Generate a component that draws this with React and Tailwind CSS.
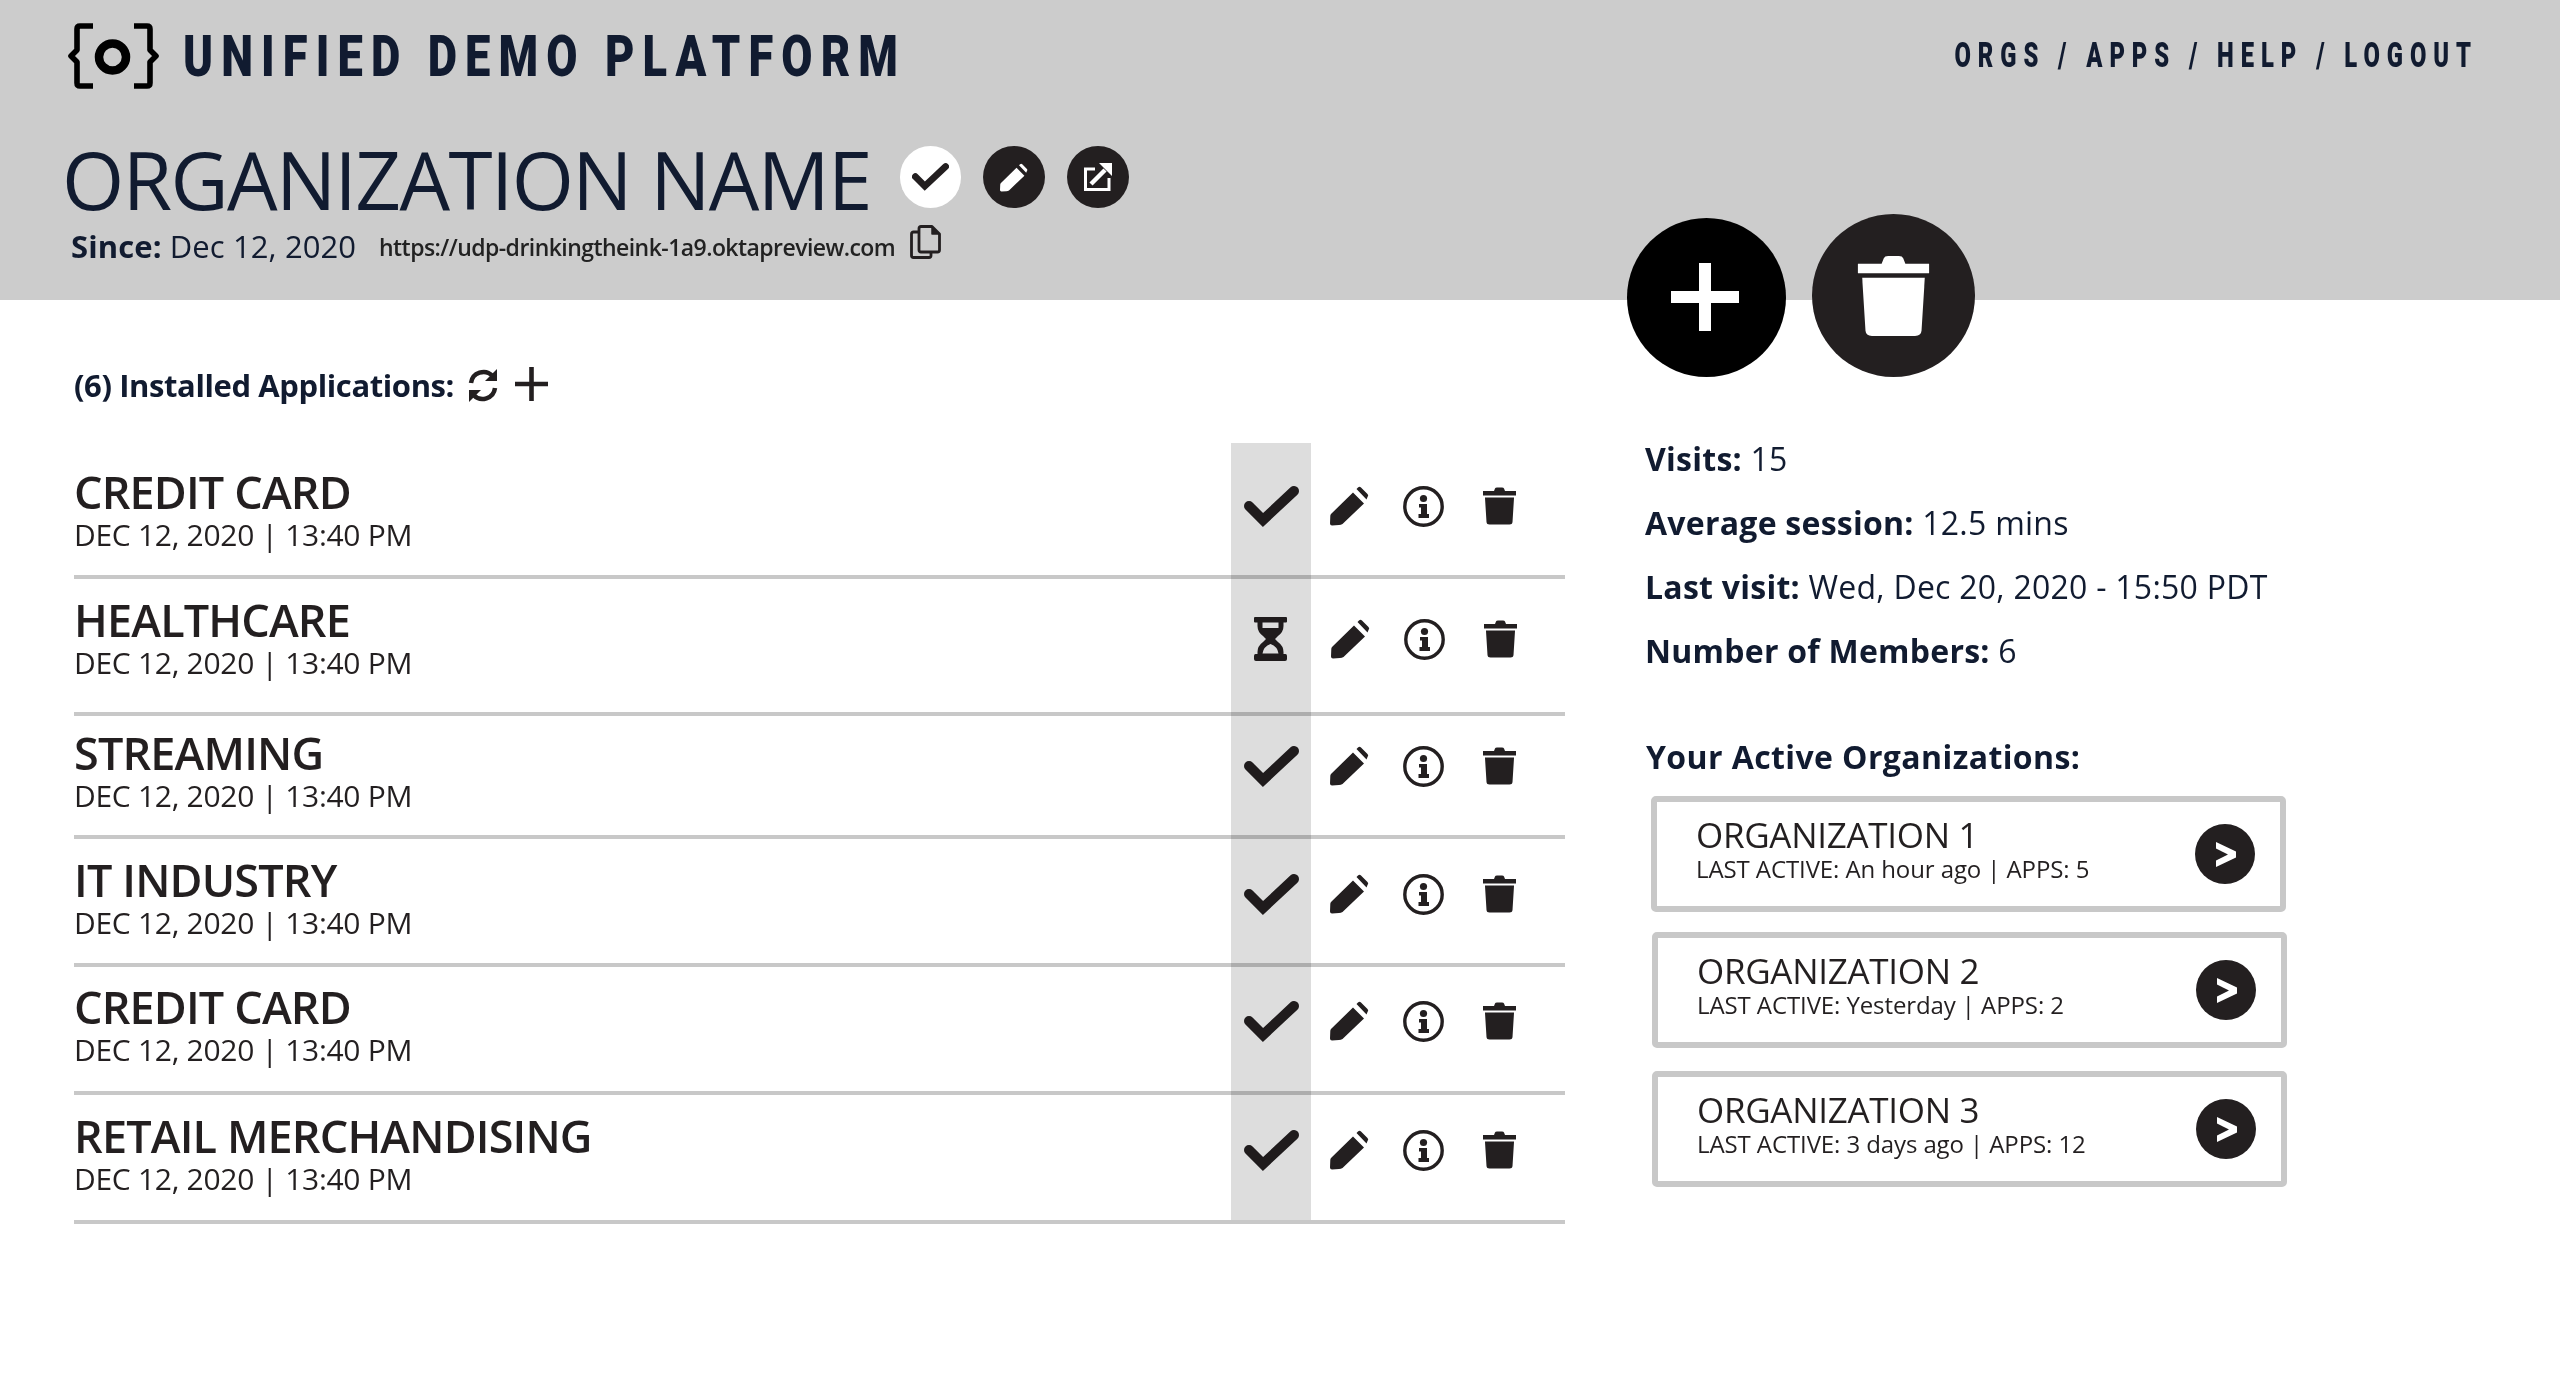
const Check = ({ className = "" }) => (
  <svg viewBox="0 0 55 41" className={className}>
    <path d="M5 20 L19 34 L50 5" fill="none" stroke="currentColor" strokeWidth="10" strokeLinecap="round" strokeLinejoin="miter" />
  </svg>
);
const Pencil = ({ className = "" }) => (
  <svg viewBox="0 0 39 40" className={className} fill="currentColor">
    <path d="M1 28 L23 6.5 L34 17.5 L12.5 38 Q11 39 9 39 L2 39.5 Q0 39.5 0 37.5 L0.3 30 Q0.3 29 1 28 Z" />
    <path d="M26.5 3 L28 1.5 Q29.5 0 31 1.5 L37.5 8 Q39 9.5 37.5 11 L36.5 13.5 Z" />
  </svg>
);
const Info = ({ className = "" }) => (
  <svg viewBox="0 0 41 41" className={className}>
    <circle cx="20.5" cy="20.5" r="18.7" fill="none" stroke="currentColor" strokeWidth="3.4" />
    <circle cx="20.5" cy="12.5" r="3.6" fill="currentColor" />
    <path d="M16 18 H24 V28 H26 V32 H15.5 V28 H18 V21.5 H16 Z" fill="currentColor" />
  </svg>
);
const Trash = ({ className = "" }) => (
  <svg viewBox="0 0 33 38" className={className} fill="currentColor">
    <path d="M0 4 H11 L12 1.5 Q12.4 0.5 14 0.5 H19 Q20.6 0.5 21 1.5 L22 4 H33 V8.5 H0 Z" />
    <path d="M2 10.5 H31 L29.5 35 Q29.3 37.5 26.5 37.5 H6.5 Q3.7 37.5 3.5 35 Z" />
  </svg>
);
const Hourglass = ({ className = "" }) => (
  <svg viewBox="0 0 33 44" className={className} fill="currentColor">
    <path fillRule="evenodd" d="M1 0 H32 Q33 0 33 1 V4.5 Q33 5.5 32 5.5 H29.5 V9 Q29.5 15 24 19 L21 22 L24 25 Q29.5 29 29.5 35 V37 H31.5 Q33 37 33 39 V42 Q33 44 31 44 H2 Q0 44 0 42 V39 Q0 37 1.5 37 H3.5 V35 Q3.5 29 9 25 L12 22 L9 19 Q3.5 15 3.5 9 V5.5 H1 Q0 5.5 0 4.5 V1 Q0 0 1 0 Z M8.5 5.5 V11 H24.5 V5.5 Z M16.5 27 Q9.5 29.5 8.5 36.5 H24.5 Q23.5 29.5 16.5 27 Z" />
  </svg>
);
const Refresh = ({ className = "" }) => (
  <svg viewBox="0 0 30 35" className={className} fill="none" stroke="currentColor">
    <path d="M3 15 A12.5 12.5 0 0 1 24.5 8" strokeWidth="4.5" />
    <path d="M27 20 A12.5 12.5 0 0 1 5.5 27" strokeWidth="4.5" />
    <path d="M29 1 V13 H17 Z" fill="currentColor" stroke="none" />
    <path d="M1 34 V22 H13 Z" fill="currentColor" stroke="none" />
  </svg>
);
const Copy = ({ className = "" }) => (
  <svg viewBox="0 0 31 34" className={className} fill="none" stroke="currentColor" strokeWidth="2.8" strokeLinejoin="round">
    <path d="M11 1.5 H22 L29.5 9 V25 Q29.5 27 27.5 27 H11 Q9 27 9 25 V3.5 Q9 1.5 11 1.5 Z" />
    <path d="M22 2 V9 H29" fill="currentColor" strokeWidth="1.5" />
    <path d="M9 7 H3.5 Q1.5 7 1.5 9 V30.5 Q1.5 32.5 3.5 32.5 H19 Q21 32.5 21 30.5 V27" />
  </svg>
);
const External = ({ className = "" }) => (
  <svg viewBox="0 0 28 28" className={className} fill="none" stroke="currentColor">
    <path d="M11 6 H1.5 V26.5 H25 V15" strokeWidth="3" />
    <path d="M7 21 L21 7" strokeWidth="4.4" />
    <path d="M15 0 H28 V13 Z" fill="currentColor" stroke="none" />
  </svg>
);
const Logo = () => (
  <svg viewBox="0 0 92 66" className="w-[92px] h-[66px] text-black" fill="none" stroke="currentColor" strokeWidth="5.6" strokeLinejoin="round">
    <path d="M25 3 H12 Q9 3 9 6 V27 L3 33 L9 39 V60 Q9 63 12 63 H25" />
    <path d="M66 3 H79 Q82 3 82 6 V27 L88 33 L82 39 V60 Q82 63 79 63 H66" />
    <circle cx="44.5" cy="34" r="13.5" strokeWidth="8.5" />
  </svg>
);

const rows = [
  { name: "CREDIT CARD", h: "h-[136px]", tp: "pt-[27px]", ip: "pt-[41px]", sx: "" },
  { name: "HEALTHCARE", h: "h-[137px]", tp: "pt-[19px]", ip: "pt-[38px]", sx: "ml-[1px]", wait: true },
  { name: "STREAMING", h: "h-[123px]", tp: "pt-[15px]", ip: "pt-[28px]", sx: "" },
  { name: "IT INDUSTRY", h: "h-[128px]", tp: "pt-[19px]", ip: "pt-[33px]", sx: "" },
  { name: "CREDIT CARD", h: "h-[128px]", tp: "pt-[18px]", ip: "pt-[32px]", sx: "" },
  { name: "RETAIL MERCHANDISING", h: "h-[129px]", tp: "pt-[19px]", ip: "pt-[33px]", sx: "" },
];

const orgs = [
  { name: "ORGANIZATION 1", sub: "LAST ACTIVE: An hour ago | APPS: 5", cls: "mt-[19px] ml-[24px]" },
  { name: "ORGANIZATION 2", sub: "LAST ACTIVE: Yesterday | APPS: 2", cls: "mt-[20px] ml-[25px]" },
  { name: "ORGANIZATION 3", sub: "LAST ACTIVE: 3 days ago | APPS: 12", cls: "mt-[23px] ml-[25px]" },
];

const stats = [
  ["Visits:", "15"],
  ["Average session:", "12.5 mins"],
  ["Last visit:", "Wed, Dec 20, 2020 - 15:50 PDT"],
  ["Number of Members:", "6"],
];

export default function App() {
  return (
    <div className="min-h-[1377px] bg-white font-['Open_Sans',sans-serif] text-[#111b30] overflow-hidden">
      <header className="h-[300px] bg-[#cccccc] pl-[68px] pr-[88px] pt-[23px]">
        <div className="flex justify-between items-start">
          <div className="flex items-center gap-[23px]">
            <Logo />
            <span className="font-['Roboto',sans-serif] font-black text-[58px] leading-[66px] tracking-[10.4px] scale-x-[0.78] origin-left whitespace-nowrap">UNIFIED DEMO PLATFORM</span>
          </div>
          <nav className="font-['Roboto',sans-serif] font-black text-[35px] leading-[40px] tracking-[10.2px] scale-x-[0.68] origin-right mt-[13px] -mr-[6px] whitespace-pre">ORGS / APPS / HELP / LOGOUT</nav>
        </div>
        <div className="flex items-center mt-[53px] -ml-[6px]">
          <h1 className="text-[80px] leading-[74px] tracking-[-1.6px] font-normal whitespace-nowrap w-[838px]">ORGANIZATION NAME</h1>
          <div className="flex gap-[22px] -mt-[4px]">
            <div className="w-[61px] h-[62px] rounded-full bg-white flex items-center justify-center text-[#231f20]">
              <Check className="w-[37px] h-[28px]" />
            </div>
            <div className="w-[62px] h-[62px] rounded-full bg-[#231f20] flex items-center justify-center text-white">
              <Pencil className="w-[28px] h-[29px]" />
            </div>
            <div className="w-[62px] h-[62px] rounded-full bg-[#231f20] flex items-center justify-center text-white">
              <External className="w-[28px] h-[28px]" />
            </div>
          </div>
        </div>
        <div className="flex items-center mt-[10px] ml-[3px]">
          <span className="text-[31px] leading-[40px] tracking-[0.1px] w-[308px] whitespace-nowrap"><b className="font-bold">Since:</b> Dec 12, 2020</span>
          <span className="text-[23px] leading-[30px] tracking-[-0.55px] font-semibold text-[#222] w-[531px] whitespace-nowrap mt-[2px]">https://udp-drinkingtheink-1a9.oktapreview.com</span>
          <Copy className="w-[31px] h-[34px] text-[#231f20] -mt-[9px]" />
        </div>
      </header>

      <main className="flex">
        <section className="ml-[74px] w-[1491px] shrink-0">
          <div className="flex items-center h-[143px] pt-[27px]">
            <h2 className="text-[31px] leading-[40px] font-bold tracking-[-0.4px] whitespace-nowrap">(6) Installed Applications:</h2>
            <Refresh className="w-[30px] h-[35px] text-[#231f20] ml-[14px]" />
            <svg viewBox="0 0 33 34" className="w-[33px] h-[34px] ml-[17px] -mt-[2px] text-[#231f20]" fill="none" stroke="currentColor" strokeWidth="4.6"><path d="M16.5 0 V34 M0 17 H33" /></svg>
          </div>
          <div className="relative">
            <div className="absolute left-[1157px] top-0 w-[80px] h-[777px] bg-[#dddddd] mix-blend-multiply" />
            {rows.map((r, i) => (
              <div key={i} className={`${r.h} flex justify-between border-b-[4px] border-[#c8c8c8] text-[#231f20]`}>
                <div className={r.tp}>
                  <div className="text-[45px] leading-[46px] font-semibold tracking-[-0.85px] -mt-[1px] whitespace-nowrap">{r.name}</div>
                  <div className="text-[30px] leading-[40px] tracking-[-0.3px] whitespace-nowrap">DEC 12, 2020 | 13:40 PM</div>
                </div>
                <div className={`${r.ip} w-[333px] shrink-0`}>
                  <div className={`flex items-center h-[44px] ${r.sx}`}>
                    <div className="w-[98px] pl-[12px] flex items-center">
                      {r.wait ? <Hourglass className="w-[33px] h-[44px] ml-[9px]" /> : <Check className="w-[55px] h-[41px]" />}
                    </div>
                    <div className="w-[73px]"><Pencil className="w-[39px] h-[40px]" /></div>
                    <div className="w-[80px]"><Info className="w-[41px] h-[41px]" /></div>
                    <Trash className="w-[33px] h-[38px]" />
                  </div>
                </div>
              </div>
            ))}
          </div>
        </section>

        <aside className="ml-[62px] -mt-[86px] w-[700px]">
          <div className="flex items-end gap-[26px]">
            <div className="w-[159px] h-[159px] rounded-full bg-black flex items-center justify-center">
              <svg viewBox="0 0 68 68" className="w-[68px] h-[68px] -ml-[3px] -mt-[2px]" fill="none" stroke="white" strokeWidth="12"><path d="M34 0 V68 M0 34 H68" /></svg>
            </div>
            <div className="w-[163px] h-[163px] rounded-full bg-[#231f20] flex items-center justify-center">
              <Trash className="w-[73px] h-[82px] text-white" />
            </div>
          </div>
          <div className="ml-[18px] mt-[62px] flex flex-col gap-[24px] text-[32px] leading-[40px] tracking-[0.25px]">
            {stats.map(([k, v]) => (
              <div key={k} className="whitespace-nowrap"><b className="font-bold">{k}</b> {v}</div>
            ))}
          </div>
          <h3 className="ml-[19px] mt-[66px] text-[32px] leading-[40px] font-bold tracking-[0.4px] whitespace-nowrap">Your Active Organizations:</h3>
          {orgs.map((o) => (
            <div key={o.name} className={`${o.cls} w-[635px] h-[116px] border-[6px] border-[#c8c8c8] rounded-[5px] flex items-center justify-between pl-[39px] pr-[25px] text-[#231f20]`}>
              <div className="-mt-[10px]">
                <div className="text-[35px] leading-[40px] font-medium tracking-[-0.3px] whitespace-nowrap">{o.name}</div>
                <div className="text-[24px] leading-[28px] tracking-[-0.1px] whitespace-nowrap">{o.sub}</div>
              </div>
              <div className="w-[60px] h-[60px] rounded-full bg-[#231f20] flex items-center justify-center">
                <svg viewBox="0 0 20 25" className="w-[20px] h-[25px] ml-[2px]" fill="white"><path d="M0 0 L20 9.5 V15.5 L0 25 V18.5 L12 12.5 L0 6.5 Z" /></svg>
              </div>
            </div>
          ))}
        </aside>
      </main>
    </div>
  );
}
